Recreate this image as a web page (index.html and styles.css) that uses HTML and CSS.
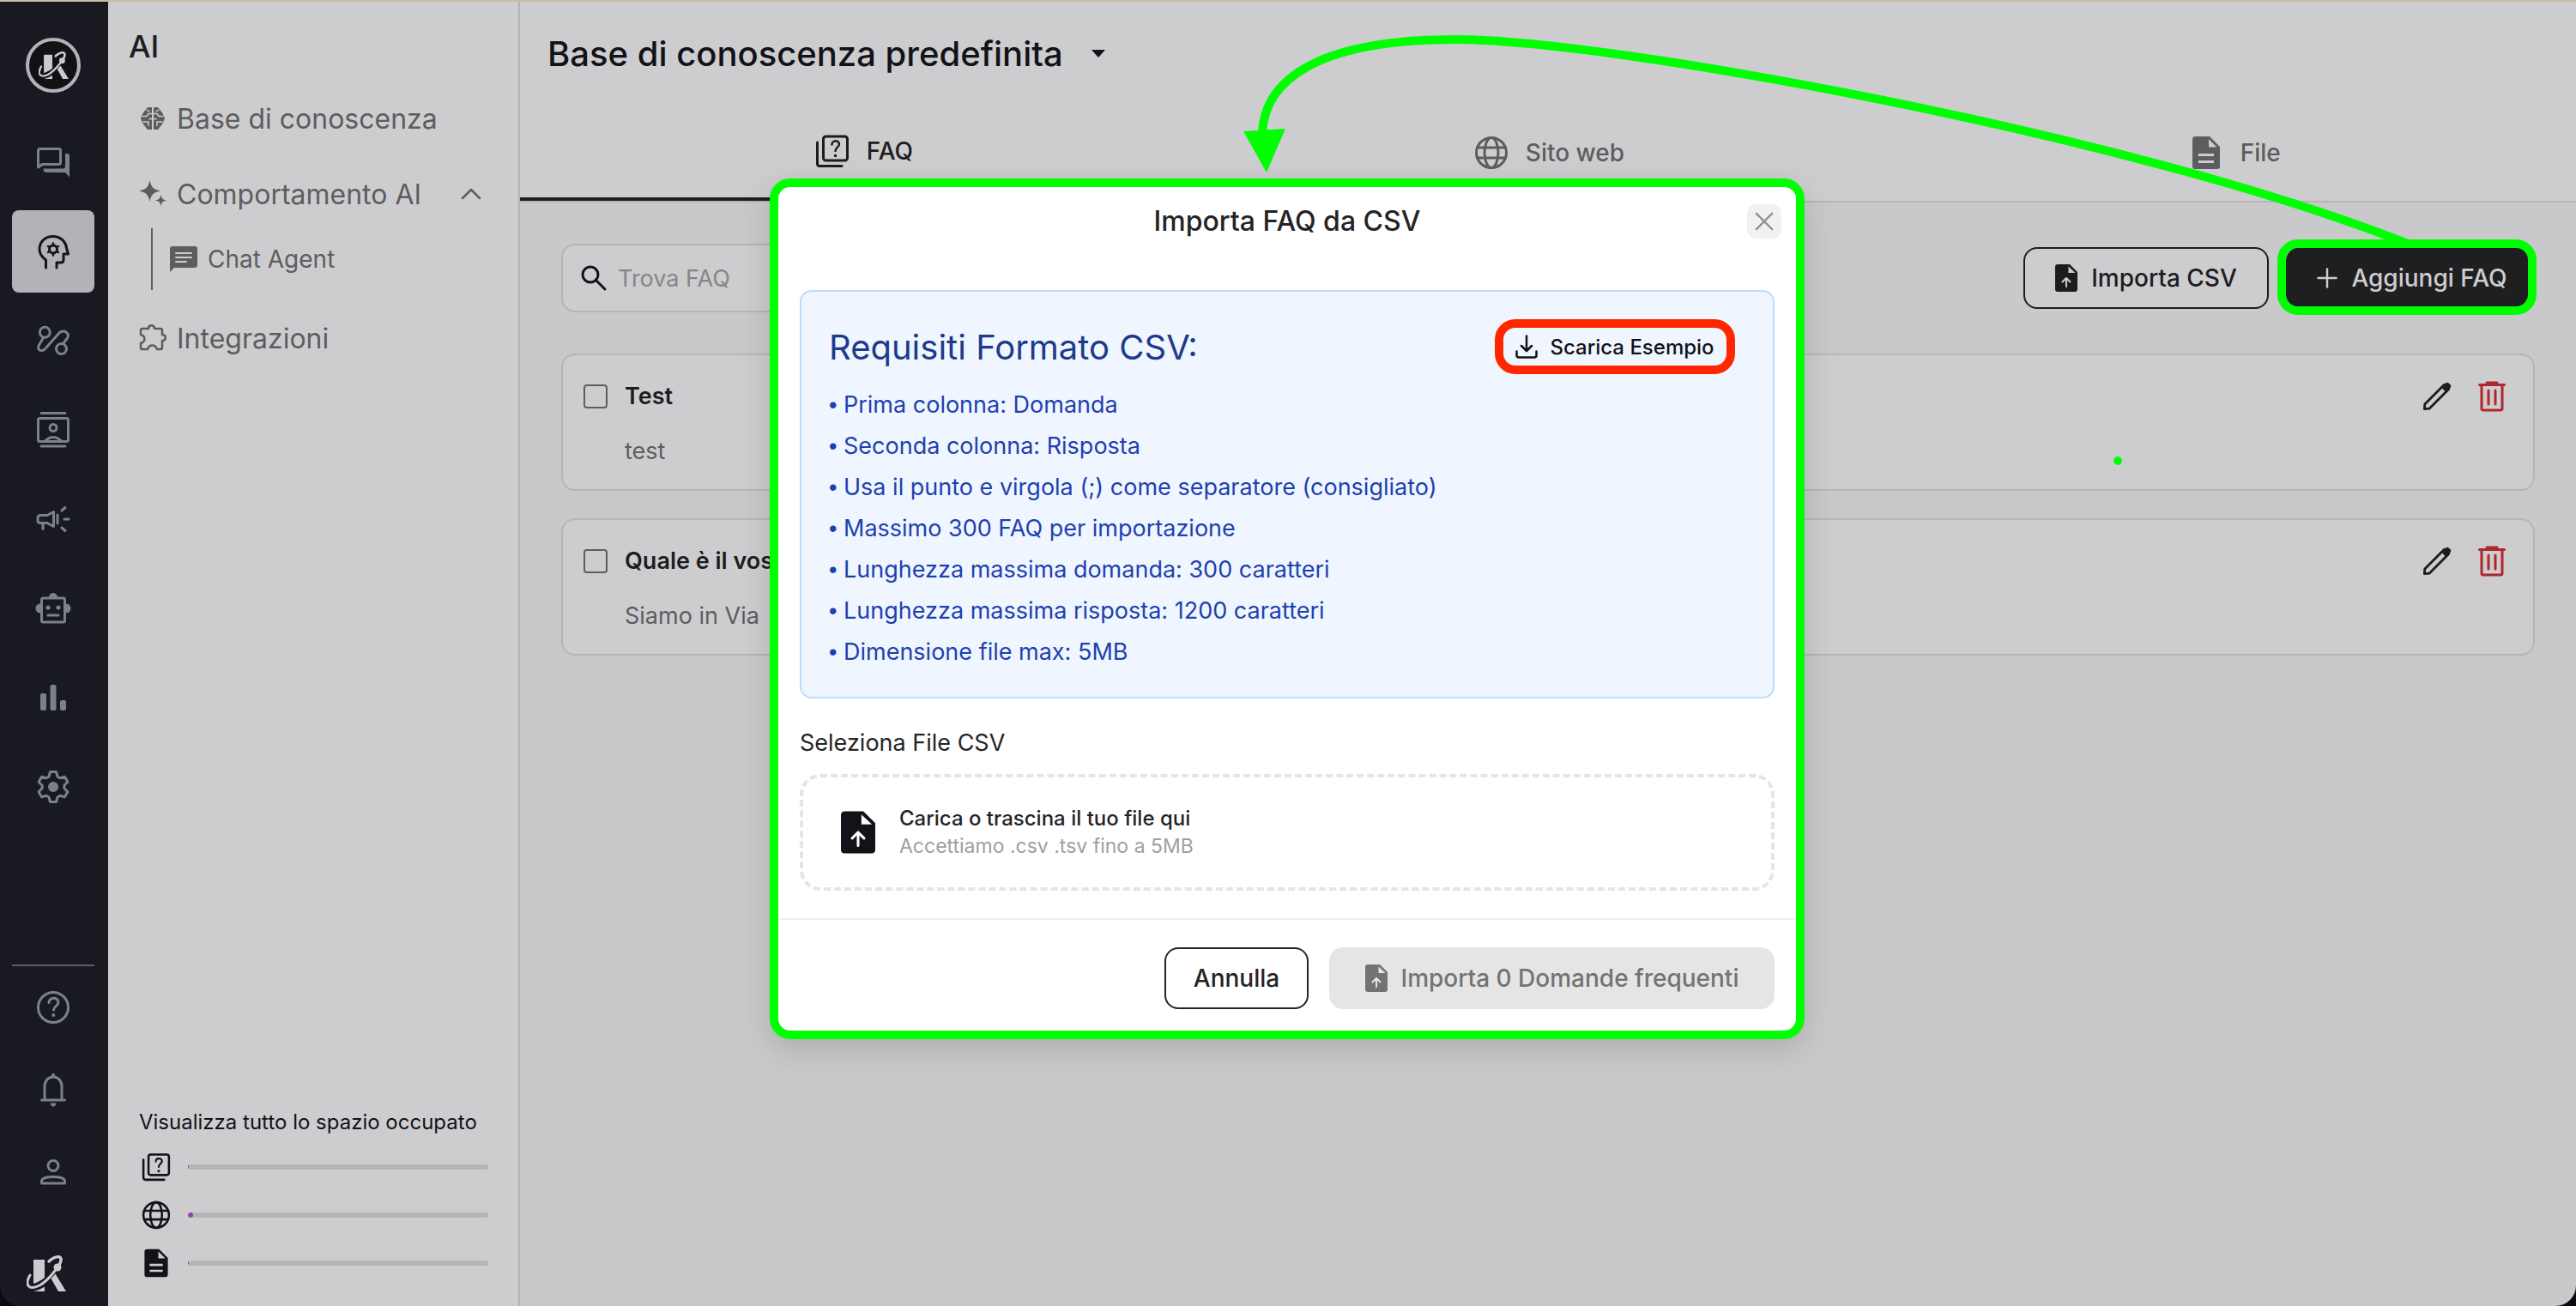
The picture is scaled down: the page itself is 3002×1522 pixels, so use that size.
FILE: index.html
```html
<!DOCTYPE html>
<html lang="it">
<head>
<meta charset="utf-8">
<meta name="viewport" content="width=device-width, initial-scale=1">
<title>Base di conoscenza - Importa FAQ da CSV</title>
<link rel="stylesheet" href="styles.css">
</head>
<body>
<svg class="sprite" aria-hidden="true">
  <symbol id="i-logo" viewBox="0 -2 46 44">
    <path class="solid" d="M8 4h13v21c-4 3-8 5.500-13 7zM8 41c5-1 9-3 13-5.500V41zM28.500 26l5-5.500L46 41h-9z"/>
    <path class="line" stroke-width="3" d="M4 22C-3 34 3 40 15 34C24 29 29 22 33 17"/>
    <path class="line" stroke-width="3.500" d="M26 6C34-1 41-1 40 5C39.500 8 38 10 37 12"/>
    <circle class="solid" cx="36" cy="13" r="4.500"/>
  </symbol>
  <symbol id="i-chat" viewBox="0 0 48 48">
    <path class="line" d="M6.500 30V10.500a2 2 0 0 1 2-2h22a2 2 0 0 1 2 2v14a2 2 0 0 1-2 2H11z"/>
    <path class="solid" d="M38 14h2q3 0 3 3v24.500L38 36H16q-3.500 0-3.500-4.500H35q3 0 3-3z"/>
  </symbol>
  <symbol id="i-head" viewBox="0 0 48 48">
    <path class="line" d="M15.500 43V34C10 30 8 26 8 21.500C8 12.500 15 6.500 23.500 6.500C32 6.500 38.500 12 39.500 20L41.500 27H36V34Q36 37 33 37H28V43"/>
    <circle class="line" cx="24" cy="21.500" r="4.500"/>
    <path class="line" stroke-width="2.500" d="M24 14.500v2M24 26.500v2M18 18l1.700 1M28.300 24l1.700 1M18 25l1.700-1M28.300 19l1.700-1"/>
  </symbol>
  <symbol id="i-flow" viewBox="0 0 48 48">
    <circle class="line" cx="14.300" cy="14.300" r="6"/><circle class="line" cx="33.500" cy="33.500" r="6"/>
    <path class="line" d="M12.500 20.500L7 30Q5.500 36 11 35.500Q14 35 16 32L31 15Q35 11.500 39 14Q43 17 40.500 21L35.500 27.500"/>
  </symbol>
  <symbol id="i-contacts" viewBox="0 0 48 48">
    <rect class="line" x="6.500" y="10.500" width="35" height="27" rx="2"/>
    <circle class="line" cx="24" cy="21.500" r="4"/>
    <path class="line" d="M10 4.500h28M10 43h28M14.500 37Q24 28 33.500 37"/>
  </symbol>
  <symbol id="i-megaphone" viewBox="0 0 48 48">
    <path class="line" d="M9 19.500h8l7.500-4v17l-7.500-4H9q-3 0-3-3v-3q0-3 3-3zM12 29v6.500M29 19v10M34 14l4-3.500M37 24h5M34 34l4 3.500"/>
  </symbol>
  <symbol id="i-robot" viewBox="0 0 48 48">
    <rect class="line" x="10.500" y="12" width="27" height="28" rx="2"/>
    <path class="solid" d="M19 11a5 5 0 0 1 10 0zM9 18.500a5.500 5.500 0 0 0 0 11zM39 18.500a5.500 5.500 0 0 1 0 11z"/>
    <circle class="solid" cx="18" cy="23" r="2.600"/><circle class="solid" cx="30" cy="23" r="2.600"/>
    <path class="line" d="M18 32h12"/>
  </symbol>
  <symbol id="i-bars" viewBox="0 0 48 48">
    <g class="solid"><rect x="9" y="19" width="7" height="20" rx="2"/><rect x="20.500" y="9" width="7" height="30" rx="2"/><rect x="32" y="27" width="7" height="12" rx="2"/></g>
  </symbol>
  <symbol id="i-gear" viewBox="0 0 48 48">
    <path class="line" d="M19 12L20.500 6.500H27.500L29 12L31.900 13.700L37.400 12.200L40.900 18.300L36.900 22.300V25.700L40.900 29.700L37.400 35.800L31.900 34.300L29 36L27.500 41.500H20.500L19 36L16.100 34.300L10.600 35.800L7.100 29.700L11.100 25.700V22.300L7.100 18.300L10.600 12.200L16.100 13.700z"/>
    <circle class="solid" cx="24" cy="24" r="6"/>
  </symbol>
  <symbol id="i-help" viewBox="0 0 48 48">
    <circle class="line" cx="24" cy="24" r="17.500"/>
    <path class="line" d="M19 18.500c0-7 11-7 11-.500c0 4-5.500 5-5.500 9"/>
    <circle class="solid" cx="24.300" cy="33" r="2"/>
  </symbol>
  <symbol id="i-bell" viewBox="0 0 48 48">
    <path class="line" d="M14 35.500V20c0-6 4-11 10-11s10 5 10 11v15.500M10.500 36h27"/>
    <path class="solid" d="M21.500 9l1-4h3l1 4zM20.500 39.500h7q-.500 4-3.500 4t-3.500-4z"/>
  </symbol>
  <symbol id="i-person" viewBox="0 0 48 48">
    <circle class="line" cx="24" cy="16.500" r="6"/>
    <path class="line" d="M10.500 37V34c1-6 26-6 27 0v3z"/>
  </symbol>
  <symbol id="i-brain" viewBox="0 0 32 32">
    <path class="solid" d="M15 3H10L6 8l-2 3-2 5 2 5 2 3 4 5h5zM17 3h5l4 5 2 3 2 5-2 5-2 3-4 5h-5z"/>
    <path class="cut" stroke-width="1.500" d="M4 13.500h5l2-3h4M28 13.500h-5l-2-3h-4M5 20h6v4.500M27 20h-6v4.500M9 6l3 2M23 6l-3 2M16 3v26M12 16.500h8"/>
  </symbol>
  <symbol id="i-sparkle" viewBox="0 0 32 32">
    <path class="solid" d="M12.500 0C14 8 17 11 25 12.500C17 14 14 17 12.500 25C11 17 8 14 0 12.500C8 11 11 8 12.500 0zM25.500 17C26.500 21.500 27.500 22.500 32 23.500C27.500 24.500 26.500 25.500 25.500 30C24.500 25.500 23.500 24.500 19 23.500C23.500 22.500 24.500 21.500 25.500 17z"/>
  </symbol>
  <symbol id="i-puzzle" viewBox="0 0 32 32">
    <path class="line" stroke-width="2.500" d="M4 5h7c0-5 7-5 7 0h7q2 0 2 2v5c5 0 5 7 0 7v8q0 2-2 2h-4c-2-6-9-6-11 0H4q-2 0-2-2v-5c6-2 6-8 0-10V7q0-2 2-2z"/>
  </symbol>
  <symbol id="i-message" viewBox="0 0 32 32">
    <path class="solid" d="M3 1h26q3 0 3 3v19q0 3-3 3H5l-5 5V4q0-3 3-3z"/>
    <path class="cut" d="M7 9h18M7 14h18M7 19h12"/>
  </symbol>
  <symbol id="i-quiz" viewBox="0 0 40 40">
    <rect class="line" x="9.500" y="3" width="28" height="28" rx="3"/>
    <path class="line" d="M2.500 10v24.500q0 3 3 3H31"/>
    <path class="line" stroke-width="2.500" d="M19.500 12.500c0-5.500 8.500-5.500 8.500-.500c0 3.500-4.500 4-4.500 8"/>
    <circle class="solid" cx="23.500" cy="25.500" r="1.800"/>
  </symbol>
  <symbol id="i-globe" viewBox="0 0 40 40">
    <circle class="line" cx="20" cy="20" r="17.500"/><ellipse class="line" cx="20" cy="20" rx="8" ry="17.500"/>
    <path class="line" d="M3.500 14h33M3.500 26h33"/>
  </symbol>
  <symbol id="i-doc" viewBox="0 0 40 40">
    <path class="solid" fill-rule="evenodd" d="M8 1h16l12 12v23q0 3-3 3H7q-3 0-3-3V4q0-3 4-3zM23 4v9.500h9.500zM11 21v3h18v-3zM11 29v3h18v-3z"/>
  </symbol>
  <symbol id="i-upload" viewBox="0 0 26 32">
    <path class="solid" fill-rule="evenodd" d="M3 0h14l9 9v20q0 3-3 3H3q-3 0-3-3V3q0-3 3-3zM15.500 2.500V10H23.500z"/>
    <path class="cut" d="M13 26V17M8.500 20.500L13 16l4.500 4.500"/>
  </symbol>
  <symbol id="i-search" viewBox="0 0 32 32">
    <circle class="line" cx="12" cy="12" r="9"/><path class="line" d="M18.500 18.500L29 29"/>
  </symbol>
  <symbol id="i-pencil" viewBox="0 0 36 36">
    <path class="line" d="M2.500 33.500L3 27.500L27 3.500L32.500 9L8.500 33z"/>
    <path class="solid" d="M23.500 7L29 1.500Q31 0 33 2l1.500 1.500Q36 5.500 34.500 7.500L29 13z"/>
  </symbol>
  <symbol id="i-trash" viewBox="0 0 32 36">
    <path class="line" d="M1.500 4.500h29M10 2h12M4 5v27q0 2 2 2h20q2 0 2-2V5M12 11v16M20 11v16"/>
  </symbol>
  <symbol id="i-download" viewBox="0 0 26 28">
    <path class="line" stroke-width="2.500" d="M13 1.500v17M7 13l6 6 6-6M1.500 19.500V24q0 2.500 2.500 2.500h18q2.500 0 2.500-2.500V19.500"/>
  </symbol>
  <symbol id="i-plus" viewBox="0 0 24 24"><path class="line" stroke-width="2.500" d="M12 1.500v21M1.500 12h21"/></symbol>
  <symbol id="i-close" viewBox="0 0 24 24"><path class="line" stroke-width="2.500" d="M2 2l20 20M22 2L2 22"/></symbol>
  <symbol id="i-up" viewBox="0 0 24 24"><path class="line" stroke-width="2.500" d="M2 17L12 7l10 10"/></symbol>
</svg>

<div class="app">
  <nav class="rail" aria-label="Principale">
    <a class="rail-brand" href="#" aria-label="Home"><svg><use href="#i-logo"/></svg></a>
    <div class="rail-main">
      <a class="rail-link" href="#" aria-label="Chat"><svg><use href="#i-chat"/></svg></a>
      <a class="rail-link active" href="#" aria-label="AI"><svg><use href="#i-head"/></svg></a>
      <a class="rail-link" href="#" aria-label="Flussi"><svg><use href="#i-flow"/></svg></a>
      <a class="rail-link" href="#" aria-label="Contatti"><svg><use href="#i-contacts"/></svg></a>
      <a class="rail-link" href="#" aria-label="Campagne"><svg><use href="#i-megaphone"/></svg></a>
      <a class="rail-link" href="#" aria-label="Bot"><svg><use href="#i-robot"/></svg></a>
      <a class="rail-link" href="#" aria-label="Statistiche"><svg><use href="#i-bars"/></svg></a>
      <a class="rail-link" href="#" aria-label="Impostazioni"><svg><use href="#i-gear"/></svg></a>
    </div>
    <div class="rail-foot">
      <a class="rail-link" href="#" aria-label="Aiuto"><svg><use href="#i-help"/></svg></a>
      <a class="rail-link" href="#" aria-label="Notifiche"><svg><use href="#i-bell"/></svg></a>
      <a class="rail-link" href="#" aria-label="Profilo"><svg><use href="#i-person"/></svg></a>
    </div>
    <svg class="rail-logo" aria-hidden="true"><use href="#i-logo"/></svg>
  </nav>

  <aside class="sidebar">
    <h2 class="sidebar-title">AI</h2>
    <nav class="menu" aria-label="AI">
      <a class="menu-item" href="#"><svg><use href="#i-brain"/></svg>Base di conoscenza</a>
      <div class="menu-group">
        <a class="menu-item" href="#"><svg><use href="#i-sparkle"/></svg>Comportamento AI<svg class="menu-caret"><use href="#i-up"/></svg></a>
        <div class="submenu"><a class="submenu-item" href="#"><svg><use href="#i-message"/></svg>Chat Agent</a></div>
      </div>
      <a class="menu-item" href="#"><svg><use href="#i-puzzle"/></svg>Integrazioni</a>
    </nav>
    <section class="usage">
      <h3 class="usage-title">Visualizza tutto lo spazio occupato</h3>
      <div class="usage-row"><svg><use href="#i-quiz"/></svg><div class="meter"><div class="meter-fill" style="width:1px"></div></div></div>
      <div class="usage-row"><svg><use href="#i-globe"/></svg><div class="meter"><div class="meter-fill" style="width:6px"></div></div></div>
      <div class="usage-row"><svg><use href="#i-doc"/></svg><div class="meter"><div class="meter-fill" style="width:1px"></div></div></div>
    </section>
  </aside>

  <main class="main">
    <header class="main-head">
      <button class="kb-picker" type="button">Base di conoscenza predefinita<span class="caret"></span></button>
    </header>
    <div class="tabs" role="tablist">
      <button class="tab active" role="tab" type="button"><svg><use href="#i-quiz"/></svg>FAQ</button>
      <button class="tab" role="tab" type="button"><svg><use href="#i-globe"/></svg>Sito web</button>
      <button class="tab" role="tab" type="button"><svg><use href="#i-doc"/></svg>File</button>
    </div>
    <div class="content">
      <div class="toolbar">
        <label class="search"><svg><use href="#i-search"/></svg><input type="search" placeholder="Trova FAQ" aria-label="Trova FAQ"></label>
        <button class="btn btn-outline" type="button"><svg class="upload"><use href="#i-upload"/></svg>Importa CSV</button>
        <button class="btn btn-dark" type="button"><svg class="plus"><use href="#i-plus"/></svg>Aggiungi FAQ</button>
      </div>
      <article class="faq">
        <input type="checkbox" id="faq1">
        <div class="faq-text"><label for="faq1">Test</label><p>test</p></div>
        <button class="icon-btn" type="button" aria-label="Modifica"><svg><use href="#i-pencil"/></svg></button>
        <button class="icon-btn danger" type="button" aria-label="Elimina"><svg><use href="#i-trash"/></svg></button>
      </article>
      <article class="faq">
        <input type="checkbox" id="faq2">
        <div class="faq-text"><label for="faq2">Quale è il vos</label><p>Siamo in Via</p></div>
        <button class="icon-btn" type="button" aria-label="Modifica"><svg><use href="#i-pencil"/></svg></button>
        <button class="icon-btn danger" type="button" aria-label="Elimina"><svg><use href="#i-trash"/></svg></button>
      </article>
    </div>
  </main>
</div>

<div class="backdrop">
  <section class="modal" role="dialog" aria-modal="true" aria-labelledby="modal-title">
    <header class="modal-head">
      <h1 id="modal-title">Importa FAQ da CSV</h1>
      <button class="close" type="button" aria-label="Chiudi"><svg><use href="#i-close"/></svg></button>
    </header>
    <div class="modal-body">
      <div class="info">
        <div class="info-head">
          <h2>Requisiti Formato CSV:</h2>
          <button class="sample" type="button"><svg><use href="#i-download"/></svg>Scarica Esempio</button>
        </div>
        <ul>
          <li><span class="bullet">•</span>Prima colonna: Domanda</li>
          <li><span class="bullet">•</span>Seconda colonna: Risposta</li>
          <li><span class="bullet">•</span>Usa il punto e virgola (;) come separatore (consigliato)</li>
          <li><span class="bullet">•</span>Massimo 300 FAQ per importazione</li>
          <li><span class="bullet">•</span>Lunghezza massima domanda: 300 caratteri</li>
          <li><span class="bullet">•</span>Lunghezza massima risposta: 1200 caratteri</li>
          <li><span class="bullet">•</span>Dimensione file max: 5MB</li>
        </ul>
      </div>
      <h3 class="field-label">Seleziona File CSV</h3>
      <button class="drop" type="button">
        <svg class="upload"><use href="#i-upload"/></svg>
        <span class="drop-text"><strong>Carica o trascina il tuo file qui</strong><small>Accettiamo .csv .tsv fino a 5MB</small></span>
      </button>
    </div>
    <footer class="modal-foot">
      <button class="btn btn-cancel" type="button">Annulla</button>
      <button class="btn btn-disabled" type="button" disabled><svg class="upload"><use href="#i-upload"/></svg>Importa 0 Domande frequenti</button>
    </footer>
  </section>
</div>

<svg class="arrow" width="2900" height="600" aria-hidden="true">
  <path d="M2806 284C2480 155 1870 46 1697 46C1545 46 1474 88 1471 155"/>
  <polygon points="1449,153 1498,150 1476,201"/>
  <circle cx="2468" cy="537" r="5"/>
</svg>
</body>
</html>
```
FILE: styles.css
```css
:root {
  --xl: 40px;
  --l: 32px;
  --m: 28px;
  --body: 27px;
  --s: 24px;
  --panel: #cdcdcf;
  --ground: #c9c9cb;
  --edge: #b5b5b8;
  --muted: #5c5d5f;
  --ink: #1d1d1f;
  --mark: #00ff00;
}
* { box-sizing: border-box; }
body {
  margin: 0;
  background: #0b0b12;
  color: var(--ink);
  font-family: Inter, "Liberation Sans", sans-serif;
  font-size: var(--m);
}
h1, h2, h3, p, ul { margin: 0; padding: 0; font-weight: 400; }
ul { list-style: none; }
a { color: inherit; text-decoration: none; }
button, input { font: inherit; color: inherit; }
button { border: 0; background: none; padding: 0; }
svg { flex: none; color: inherit; --cut: var(--panel); }
.sprite { position: absolute; width: 0; height: 0; }
.solid { fill: currentColor; }
.line { fill: none; stroke: currentColor; stroke-linecap: round; stroke-linejoin: round; }
.line:not([stroke-width]) { stroke-width: 3px; }
.cut { fill: none; stroke: var(--cut); stroke-linecap: round; stroke-linejoin: round; }
.cut:not([stroke-width]) { stroke-width: 2px; }

.app {
  display: grid;
  grid-template-columns: 126px 480px 1fr;
  min-height: 100vh;
  border-top: 2px solid #cbbd9f;
  border-radius: 0 0 24px 24px;
  overflow: hidden;
}

.rail {
  display: flex;
  flex-direction: column;
  padding: 42px 16px 16px 14px;
  background: #191922;
  color: #7b808a;
}
.rail-brand {
  display: grid;
  place-items: center;
  align-self: center;
  width: 64px;
  height: 64px;
  border: 4px solid #b2b3b9;
  border-radius: 50%;
  background: #121214;
  color: #c9cacd;
}
.rail-brand svg { width: 35px; height: 34px; }
.rail-main { display: grid; gap: 8px; margin-top: 33px; }
.rail-foot { margin-top: auto; border-top: 2px solid #5c5d66; }
.rail-link { display: grid; place-items: center; height: 96px; border-radius: 8px; }
.rail-link svg { width: 48px; height: 48px; }
.rail-link.active { background: #b2b3b9; color: #15151c; }
.rail-logo { width: 46px; height: 44px; margin: 48px 0 0 17px; color: #cbccd0; }

.sidebar {
  display: flex;
  flex-direction: column;
  padding: 30px 35px 22px 36px;
  border-right: 2px solid var(--edge);
  background: var(--panel);
}
.sidebar-title { margin-left: -12px; font-size: 36px; line-height: 44px; font-weight: 500; }
.menu { display: grid; gap: 40px; margin-top: 38px; color: var(--muted); }
.menu-item { display: flex; align-items: center; gap: 12px; height: 48px; font-size: var(--l); }
.menu-item svg { width: 32px; height: 32px; }
.menu-item .menu-caret { width: 24px; height: 24px; margin-left: auto; margin-right: 8px; }
.menu-group { margin-bottom: -8px; }
.submenu { margin: 16px 0 0 14px; padding-left: 20px; border-left: 2px solid var(--muted); }
.submenu-item { display: flex; align-items: center; gap: 12px; height: 72px; font-size: var(--m); }
.submenu-item svg { width: 32px; height: 32px; }
.usage { margin-top: auto; color: #121219; }
.usage-title { margin-bottom: 8px; font-size: var(--s); line-height: 32px; white-space: nowrap; }
.usage-row { display: flex; align-items: center; gap: 20px; height: 56px; padding-left: 3px; }
.usage-row svg { width: 34px; height: 34px; }
.meter { flex: 1; height: 6px; border-radius: 3px; background: var(--edge); overflow: hidden; }
.meter-fill { height: 6px; border-radius: 3px; background: #8e44ad; }

.main { display: flex; flex-direction: column; background: var(--ground); }
.main-head { display: flex; align-items: center; height: 120px; padding: 0 32px; background: var(--panel); }
.kb-picker { display: flex; align-items: center; gap: 33px; color: #121219; font-size: var(--xl); font-weight: 500; }
.caret { border: 8px solid transparent; border-top: 9px solid #121219; border-bottom: 0; }
.tabs { display: grid; grid-template-columns: repeat(3, 1fr); border-bottom: 2px solid var(--edge); background: var(--panel); }
.tab { display: flex; align-items: center; justify-content: center; gap: 20px; height: 112px; padding-left: 3px; color: var(--muted); font-size: var(--m); font-weight: 500; }
.tab.active { border-bottom: 4px solid #1d1d1d; color: var(--ink); }
.tab svg { width: 40px; height: 40px; }

.content { display: grid; gap: 32px; padding: 48px; }
.toolbar { display: flex; align-items: center; gap: 20px; margin-bottom: 16px; }
.search {
  display: flex;
  align-items: center;
  gap: 12px;
  width: 800px;
  height: 80px;
  margin-right: auto;
  padding: 0 20px;
  border: 2px solid var(--edge);
  border-radius: 16px;
  background: var(--panel);
  color: #121219;
}
.search svg { width: 32px; height: 32px; }
.search input { flex: 1; min-width: 0; border: 0; outline: 0; padding: 0; background: none; font-size: var(--body); }
.search input::placeholder { color: #858587; opacity: 1; }
.btn { display: flex; align-items: center; justify-content: center; gap: 16px; height: 72px; border-radius: 16px; font-size: var(--m); font-weight: 500; }
.upload { width: 26px; height: 32px; }
.btn-outline { width: 286px; border: 2px solid var(--ink); background: var(--panel); }
.btn-dark { position: relative; width: 290px; padding-left: 4px; background: #1f1f21; color: var(--panel); }
.btn-dark::after {
  content: "";
  position: absolute;
  inset: -9px -2px -7px -10px;
  border: 10px solid var(--mark);
  border-radius: 24px;
}
.plus { width: 24px; height: 24px; }
.faq {
  display: flex;
  align-items: flex-start;
  height: 160px;
  padding: 30px 31px 0 24px;
  border: 2px solid var(--edge);
  border-radius: 16px;
  background: var(--panel);
}
.faq input { appearance: none; width: 28px; height: 28px; margin: 4px 20px 0 0; border: 2px solid var(--muted); border-radius: 4px; }
.faq-text { flex: 1; line-height: 36px; font-size: var(--body); }
.faq-text label { display: block; font-weight: 600; }
.faq-text p { margin-top: 28px; color: var(--muted); }
.icon-btn { display: flex; margin-left: 30px; color: var(--ink); }
.icon-btn svg { width: 34px; height: 36px; }
.icon-btn.danger { color: #b0272c; }

.backdrop { position: absolute; inset: 0; display: flex; justify-content: center; align-items: flex-start; padding: 208px 0 0; }
.modal {
  width: 1206px;
  margin-right: 2px;
  border: 10px solid var(--mark);
  border-radius: 24px;
  background: #fff;
  box-shadow: 0 12px 36px rgba(0, 0, 0, .14);
  color: #242426;
}
.modal-head { position: relative; padding: 20px 60px; text-align: center; }
.modal-head h1 { font-size: var(--l); line-height: 40px; font-weight: 500; }
.close { position: absolute; top: 20px; right: 17px; display: grid; place-items: center; width: 40px; height: 40px; border-radius: 10px; background: #f1f1f1; color: #8f8f8f; }
.close svg { width: 22px; height: 22px; }
.modal-body { padding: 40px 25px 32px; }
.info { padding: 32px 44px 28px 32px; border: 2px solid #bfdbfe; border-radius: 14px; background: #eff6ff; color: #1e40af; }
.info-head { display: flex; align-items: center; justify-content: space-between; height: 64px; margin-bottom: 12px; }
.info-head h2 { color: #1e3a8a; font-size: var(--xl); }
.sample { display: flex; align-items: center; justify-content: center; gap: 14px; width: 280px; height: 64px; border: 10px solid #ff2600; border-radius: 24px; color: #121219; font-size: var(--s); font-weight: 500; white-space: nowrap; }
.sample svg { width: 26px; height: 28px; }
.info li { line-height: 48px; font-size: var(--body); }
.bullet { display: inline-block; width: 17px; font-family: "Liberation Sans", sans-serif; }
.field-label { margin-top: 32px; line-height: 40px; font-size: var(--body); }
.drop { display: flex; align-items: center; gap: 28px; width: 100%; height: 136px; margin-top: 16px; padding: 0 44px; border: 4px dashed #e5e5e5; border-radius: 24px; text-align: left; }
.drop svg { width: 40px; height: 52px; color: #121219; --cut: #fff; }
.drop-text { display: grid; line-height: 32px; font-size: var(--s); }
.drop-text strong { font-weight: 500; }
.drop-text small { color: #9f9f9f; font-size: 23px; }
.modal-foot { display: flex; justify-content: flex-end; gap: 24px; padding: 32px 25px 25px; border-top: 2px solid #f1f1f1; }
.btn-cancel { width: 168px; border: 2px solid #242426; }
.btn-disabled { width: 519px; background: #e5e5e5; color: #737373; }
.btn-disabled svg { --cut: #e5e5e5; }

.arrow { position: absolute; top: 0; left: 0; pointer-events: none; }
.arrow path { fill: none; stroke: var(--mark); stroke-width: 10px; }
.arrow polygon, .arrow circle { fill: var(--mark); }
```
